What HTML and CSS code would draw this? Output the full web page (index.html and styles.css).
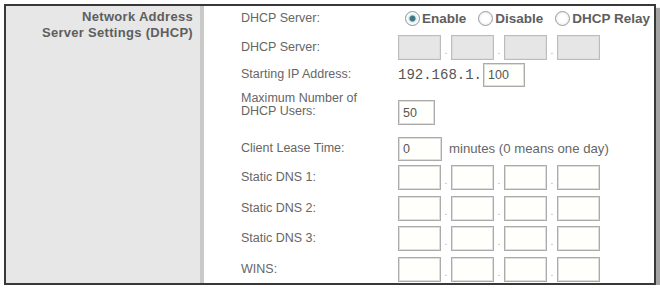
FILE: index.html
```html
<!DOCTYPE html>
<html lang="en">
<head>
  <meta charset="UTF-8">
  <meta name="viewport" content="width=device-width, initial-scale=1.0">
  <title>Network Address Server Settings (DHCP)</title>
  <link rel="stylesheet" href="styles.css">
</head>
<body>
  <div class="panel">
    <div class="section-title">Network Address<br>Server Settings (DHCP)</div>

    <div class="fields">
      <div class="label">DHCP Server:</div>
      <div class="value radios">
        <label><input type="radio" name="dhcp" checked>Enable</label>
        <label><input type="radio" name="dhcp">Disable</label>
        <label><input type="radio" name="dhcp">DHCP Relay</label>
      </div>

      <div class="label">DHCP Server:</div>
      <div class="value">
        <input class="octet" type="text" disabled><span class="dot">.</span>
        <input class="octet" type="text" disabled><span class="dot">.</span>
        <input class="octet" type="text" disabled><span class="dot">.</span>
        <input class="octet" type="text" disabled>
      </div>

      <div class="label">Starting IP Address:</div>
      <div class="value">
        <span class="prefix">192.168.1.</span><input class="box box-ip" type="text" value="100">
      </div>

      <div class="label label-wrap">Maximum Number of<br>DHCP Users:</div>
      <div class="value value-low">
        <input class="box box-users" type="text" value="50">
      </div>

      <div class="label">Client Lease Time:</div>
      <div class="value">
        <input class="box box-lease" type="text" value="0"><span class="hint">minutes (0 means one day)</span>
      </div>

      <div class="label">Static DNS 1:</div>
      <div class="value">
        <input class="octet" type="text"><span class="dot">.</span>
        <input class="octet" type="text"><span class="dot">.</span>
        <input class="octet" type="text"><span class="dot">.</span>
        <input class="octet" type="text">
      </div>

      <div class="label">Static DNS 2:</div>
      <div class="value">
        <input class="octet" type="text"><span class="dot">.</span>
        <input class="octet" type="text"><span class="dot">.</span>
        <input class="octet" type="text"><span class="dot">.</span>
        <input class="octet" type="text">
      </div>

      <div class="label">Static DNS 3:</div>
      <div class="value">
        <input class="octet" type="text"><span class="dot">.</span>
        <input class="octet" type="text"><span class="dot">.</span>
        <input class="octet" type="text"><span class="dot">.</span>
        <input class="octet" type="text">
      </div>

      <div class="label">WINS:</div>
      <div class="value">
        <input class="octet" type="text"><span class="dot">.</span>
        <input class="octet" type="text"><span class="dot">.</span>
        <input class="octet" type="text"><span class="dot">.</span>
        <input class="octet" type="text">
      </div>
    </div>
  </div>
</body>
</html>
```

FILE: styles.css
```css
/* General Reset */
body, input {
  margin: 0;
  padding: 0;
  box-sizing: border-box;
}

body {
  font-family: 'Liberation Sans', Arial, sans-serif;
  background-color: #ffffff;
  color: #666666;
  padding: 4px 0 0 4px;
}

/* Outer frame */
.panel {
  display: flex;
  width: 652px;
  height: 281px;
  border: 2px solid #383838;
  box-shadow: 4px 4px 1px #a4a4a4;
  box-sizing: border-box;
}

/* Left column */
.section-title {
  width: 198px;
  flex-shrink: 0;
  background-color: #e7e7e7;
  border-right: 4px solid #c9c9c9;
  padding: 3px 7px 0 0;
  text-align: right;
  font-size: 13px;
  font-weight: bold;
  letter-spacing: 0.3px;
  line-height: 16px;
  color: #5e5e5e;
  box-sizing: border-box;
}

/* Right column */
.fields {
  flex: 1;
  display: grid;
  grid-template-columns: 157px 1fr;
  grid-template-rows: 29px 27px 29px 45px 29px 31px 30px 31px 26px;
  padding-left: 37px;
  font-size: 12.5px;
}

.label {
  line-height: 25px;
  white-space: nowrap;
}

.label-wrap {
  line-height: 13px;
  padding-top: 1px;
}

.value {
  display: flex;
  align-items: center;
  height: 25px;
  white-space: nowrap;
}

.value-low {
  margin-top: 9px;
}

/* Radios */
.radios label {
  display: flex;
  flex-shrink: 0;
  align-items: center;
  font-size: 13.5px;
  font-weight: bold;
  color: #5e5e5e;
  margin-right: 12px;
}

.radios label:first-child {
  margin-left: 7px;
}

.radios label:last-child {
  margin-right: 0;
}

.radios input {
  appearance: none;
  flex-shrink: 0;
  width: 15px;
  height: 15px;
  margin: 0 2px 0 0;
  border: 1px solid #9a9a9a;
  border-radius: 50%;
  background: radial-gradient(circle, #ffffff 40%, #e2e2e2 100%);
}

.radios input:checked {
  background: radial-gradient(circle, #3f7684 0, #3f7684 2.5px, #d8e6ea 3.5px, #ffffff 60%, #dcdcdc 100%);
  border-color: #7f9aa2;
}

/* Text boxes */
.octet, .box {
  height: 25px;
  border: 1px solid #ababab;
  box-shadow: inset 0 0 0 1px #dedede;
  background-color: #fffffb;
  font-family: 'Liberation Sans', Arial, sans-serif;
  font-size: 12.5px;
  color: #555555;
  padding: 0 4px;
}

.octet {
  width: 43px;
}

.octet:disabled {
  background-color: #e6e6e6;
  border-color: #bcbcbc;
}

.dot {
  width: 10px;
  text-align: center;
  color: #aaaaaa;
  font-size: 10px;
  padding-top: 6px;
}

.prefix {
  font-family: 'Liberation Mono', 'Courier New', monospace;
  font-size: 14px;
  color: #555555;
  margin-right: 1px;
}

.box-ip {
  width: 42px;
  height: 24px;
}

.box-users {
  width: 37px;
}

.box-lease {
  width: 44px;
  height: 24px;
}

.hint {
  margin-left: 7px;
  font-size: 13.2px;
}
```
